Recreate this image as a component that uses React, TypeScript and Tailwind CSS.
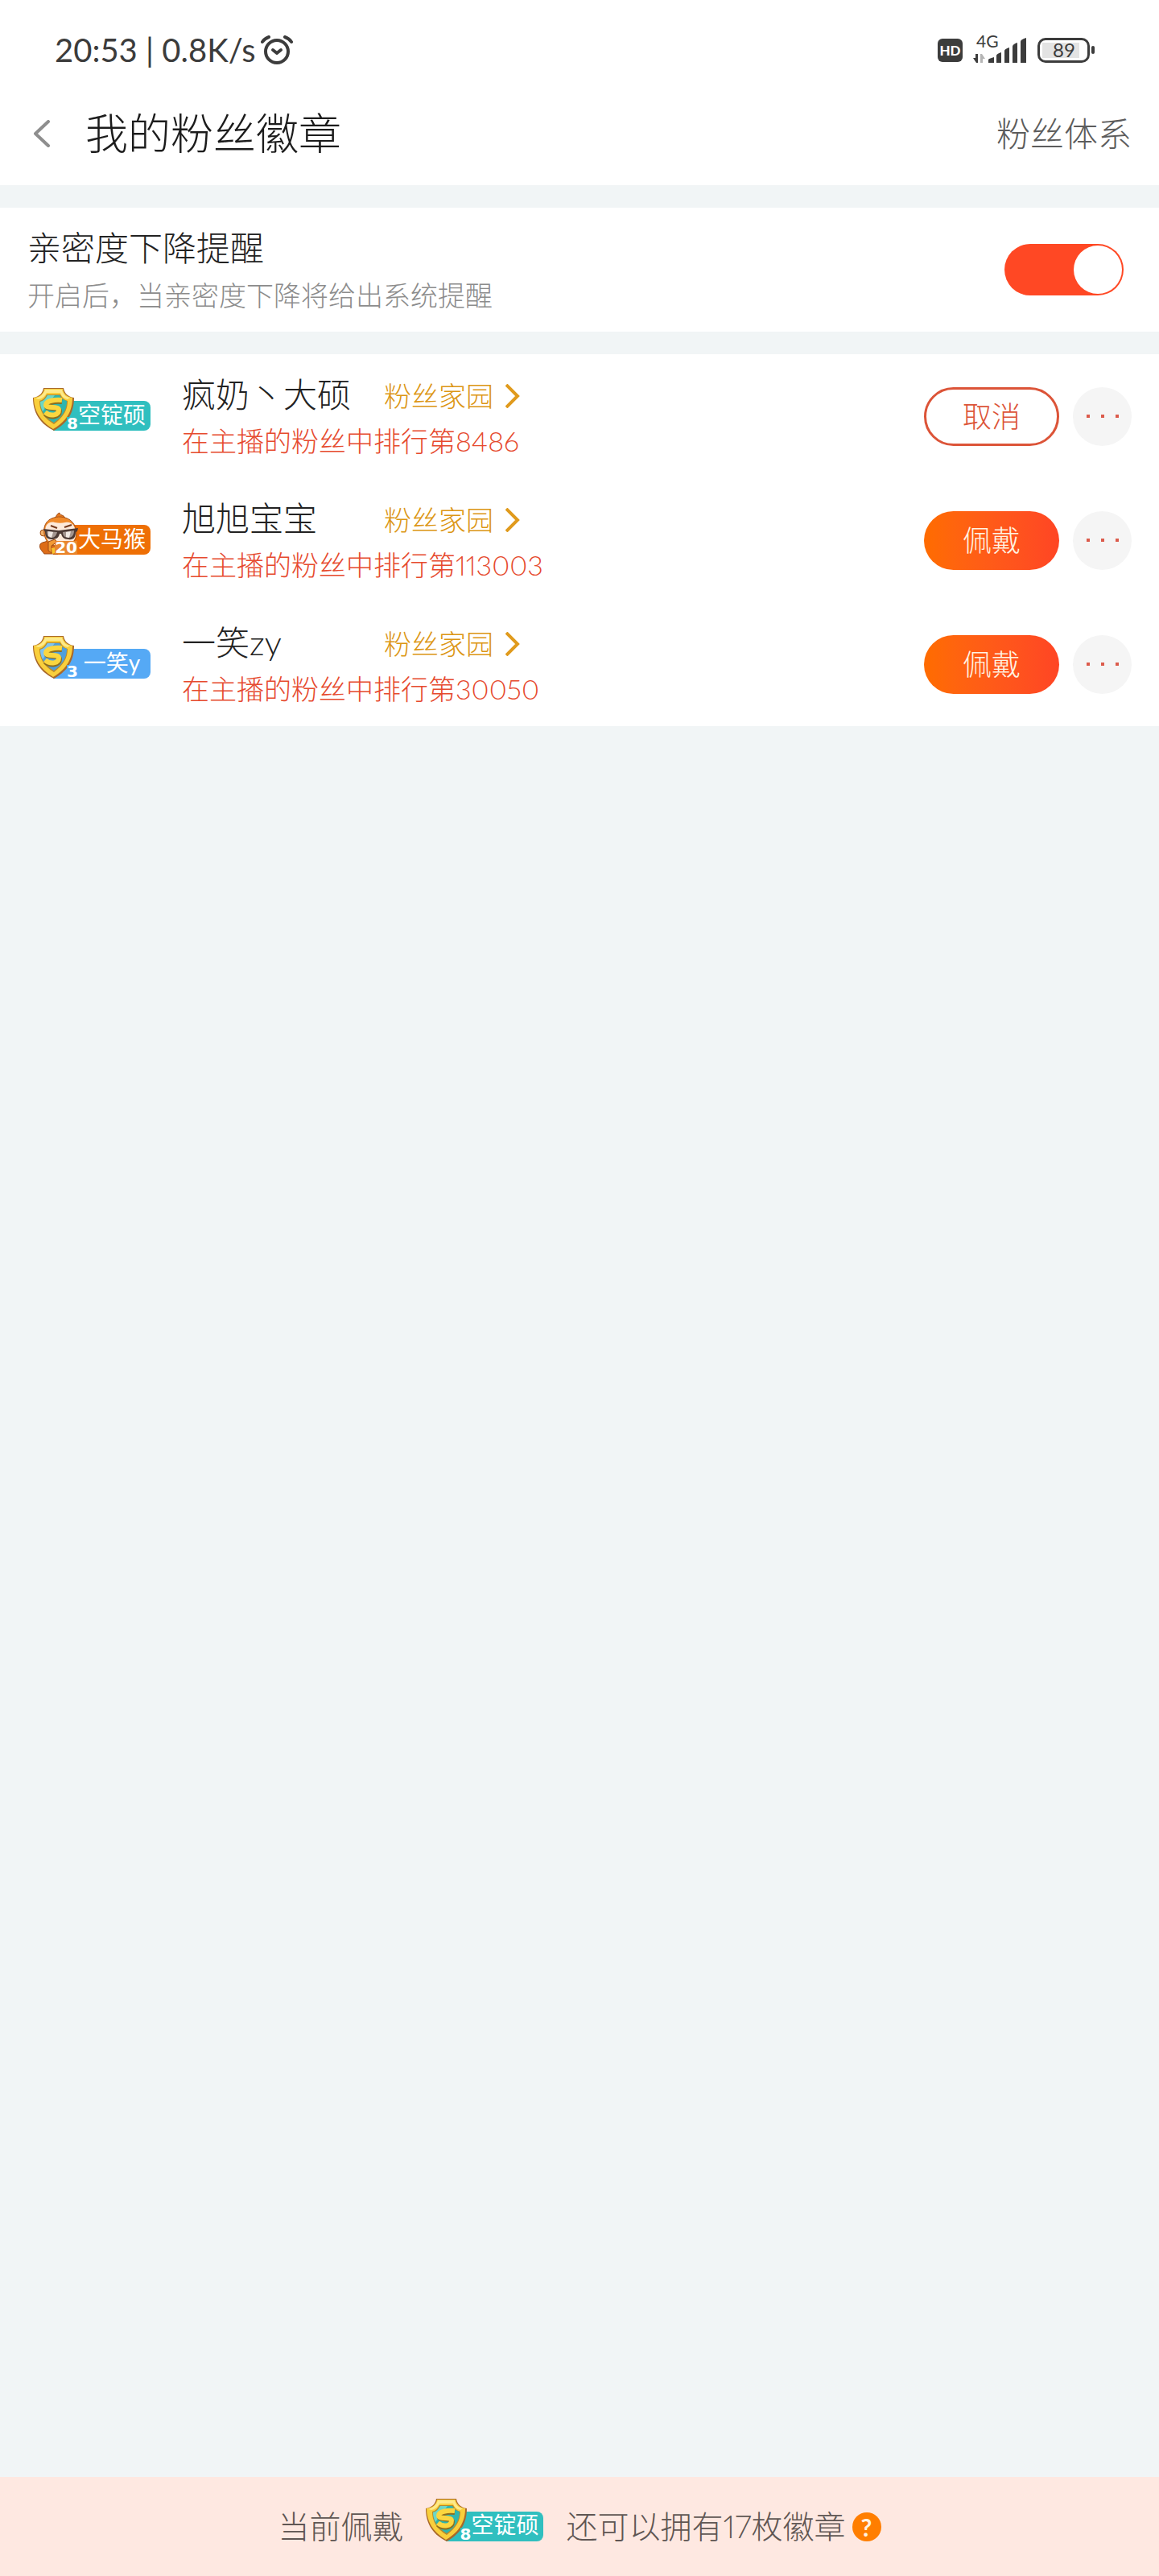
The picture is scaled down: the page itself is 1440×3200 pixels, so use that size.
import { useState } from "react";

type BadgeKind = "teal" | "blue" | "monkey";

type Badge = { kind: BadgeKind; level: string; label: string };

type Streamer = { name: string; rank: string; worn: boolean; badge: Badge };

const streamers: Streamer[] = [
  { name: "疯奶丶大硕", rank: "8486", worn: true, badge: { kind: "teal", level: "8", label: "空锭硕" } },
  { name: "旭旭宝宝", rank: "113003", worn: false, badge: { kind: "monkey", level: "20", label: "大马猴" } },
  { name: "一笑zy", rank: "30050", worn: false, badge: { kind: "blue", level: "3", label: "一笑y" } },
];

const barColor: Record<BadgeKind, string> = {
  teal: "bg-[#30bfbf]",
  blue: "bg-[#55a9f5]",
  monkey: "bg-[#ee6f05]",
};

const levelColor: Record<BadgeKind, string> = {
  teal: "right-[90px] bg-[#30bfbf]",
  blue: "right-[90px] bg-[#55a9f5]",
  monkey: "right-[91px] bg-[#e8862f]",
};

function ShieldIcon({ kind }: { kind: "teal" | "blue" }) {
  const inner = kind === "teal" ? "#2fb5ae" : "#4f9fdc";
  const light = kind === "teal" ? "#6fd6c4" : "#7fc3ee";
  return (
    <svg viewBox="0 0 51 53" className="absolute left-0 top-0 h-[53px] w-[51px]" aria-hidden="true">
      <path d="M13 0H38C39 6 43 11 51 12C51 27 46 42 26 53C6 43 0 28 0 12C8 11 12 6 13 0Z" fill="#a9692a" />
      <path d="M14 1H37C38 7 42 11 49 12C49 26 44 40 25 51C8 41 1 27 1 12C9 11 13 7 14 1Z" fill="#f9cf3c" />
      <path d="M15 2H36C37 7 40 11 46 12L43 14C38 13 35 10 34 6H17C15 10 12 13 7 14L3 13C9 11 13 8 15 2Z" fill="#fde98a" />
      <path d="M17 8H34C36 12 39 15 43 16C43 27 38 36 26 45C13 37 8 28 8 16C12 15 15 12 17 8Z" fill="#b98a2c" />
      <path d="M18 9H33C35 13 38 15 42 16C42 27 37 35 26 43C14 36 9 27 9 17C13 16 16 13 18 9Z" fill={inner} />
      <path d="M18 9H27L12 29C10 25 9 21 9 17C13 16 16 13 18 9Z" fill={light} />
      <path d="M36 17C27 16 17 18 17 23C17 27 33 23 33 29C33 36 22 38 15 32" fill="none" stroke="#8d6d1e" strokeWidth="6" strokeLinejoin="round" />
      <path d="M36 15C27 14 16 16 16 21C16 26 32 22 32 27C32 34 22 36 15 30" fill="none" stroke="#fbd63f" strokeWidth="6" strokeLinejoin="round" />
    </svg>
  );
}

function MonkeyIcon() {
  return (
    <svg viewBox="0 0 51 53" className="absolute left-[7px] top-0 h-[53px] w-[51px]" aria-hidden="true">
      <path d="M20 8C22 5 23 2 26 1C26 4 28 3 31 5C32 6 33 7 33 9Z" fill="#e87a1e" stroke="#9d4a16" />
      <path d="M2 40C4 37 8 38 10 36L20 34L24 52H7C4 48 0 45 2 40Z" fill="#dd6d18" stroke="#9d4a16" />
      <circle cx="6" cy="26" r="4" fill="#f3b26b" stroke="#9d4a16" />
      <path d="M7 27C5 13 14 6 27 6C40 7 47 15 47 28C46 39 36 44 27 43C15 43 8 37 7 27Z" fill="#f08a2a" stroke="#a65219" />
      <path d="M9 28C6 16 13 11 20 13C25 14 29 14 33 13C41 11 47 18 46 29C45 38 36 43 27 42C17 42 10 37 9 28Z" fill="#fdeadb" />
      <path d="M15 17L23 20M32 19L41 16" stroke="#75391c" strokeWidth="2" />
      <path d="M6 21L25 23L49 20L48 24L46 25C46 32 43 35 37 34C31 34 29 31 28 27H26C25 32 22 34 16 34C10 34 8 30 8 25Z" fill="#4c3a35" />
      <path d="M10 24L23 25C22 29 20 32 16 32C12 32 10 29 10 24Z" fill="#a3958f" />
      <path d="M30 25L44 23C44 29 41 32 37 32C33 32 30 30 30 25Z" fill="#a3958f" />
      <path d="M12 24L18 25L16 32L12 30ZM34 25L40 24L38 32L34 31Z" fill="#f0e8e3" />
      <path d="M12 37L20 34L23 37L16 42V51L12 48Z" fill="#f39a34" stroke="#9d4a16" />
      <path d="M16 45L21 44V51L17 52Z" fill="#f9c52e" />
    </svg>
  );
}

function FanBadge({ badge }: { badge: Badge }) {
  return (
    <div className="relative h-[70px] w-[146px] shrink-0 pt-4">
      <div
        className={`ml-[25px] flex h-[37px] items-center justify-center rounded-r-lg pb-1 pl-[25px] text-[28px] font-normal leading-none whitespace-nowrap text-white ${barColor[badge.kind]}`}
      >
        {badge.label}
      </div>
      {badge.kind === "monkey" ? <MonkeyIcon /> : <ShieldIcon kind={badge.kind} />}
      <span
        className={`absolute top-[36px] font-['DejaVu_Sans'] text-[20px] leading-[16px] font-bold text-white ${levelColor[badge.kind]}`}
      >
        {badge.level}
      </span>
    </div>
  );
}

function StatusBar() {
  return (
    <div className="flex h-[124px] items-center justify-between pr-20 pl-[68px] text-[#3c3c3c]">
      <div className="flex items-center gap-1.5 text-[40px] leading-none font-normal">
        <span>20:53 | 0.8K/s</span>
        <svg viewBox="0 0 40 36" className="h-9 w-10" fill="none" stroke="currentColor" strokeLinecap="round" aria-label="闹钟">
          <circle cx="20" cy="20" r="14" strokeWidth="4" />
          <path d="M2 8C4 5 7 3 10 2M38 8C36 5 33 3 30 2" strokeWidth="4" />
          <path d="M15 18L20 22L25 18" strokeWidth="4" strokeLinejoin="round" />
        </svg>
      </div>
      <div className="flex items-center font-normal">
        <span className="flex h-[29px] w-[31px] items-center justify-center rounded-md bg-[#3c3c3c] text-[17px] leading-none font-black text-white">
          HD
        </span>
        <div className="relative ml-[13px] h-[34px] w-[67px]">
          <span className="absolute -top-1.5 left-1 text-[21px] leading-[24px]">4G</span>
          <svg viewBox="0 0 67 34" className="h-[34px] w-[67px]" fill="currentColor" aria-hidden="true">
            <path d="M3 22H6V33H4L0 27H3Z" />
            <path d="M9 22H11L15 28H12V33H9Z" fill="#b5b5b5" />
            <path d="M19 33V29Q19 28 26 26V33ZM29 33V24Q29 22 35 20V33ZM39 33V18Q39 16 45 14V33ZM49 33V13Q49 10 55 8V33ZM59 33V7Q59 4 66 2V33Z" />
          </svg>
        </div>
        <div className="ml-[13px] flex items-center gap-0.5" aria-label="电量 89%">
          <div className="h-[31px] w-[65px] rounded-[10px] border-[3px] border-current p-[3px]">
            <div className="flex h-full w-[46px] items-center justify-center bg-[#e3e3e3] pl-2 text-[24px] leading-none">89</div>
          </div>
          <div className="h-[10px] w-1 rounded-full bg-current" />
        </div>
      </div>
    </div>
  );
}

function StreamerRow({ item, onToggle }: { item: Streamer; onToggle: () => void }) {
  return (
    <li className="flex h-[154px] items-center px-[34px]">
      <div className="w-48 shrink-0 pl-[7px]">
        <FanBadge badge={item.badge} />
      </div>
      <div className="min-w-0 grow pt-1">
        <div className="flex h-[58px] items-center">
          <h2 className="w-[251px] shrink-0 text-[42px] leading-none text-[#222222]">{item.name}</h2>
          <a href="#home" className="flex items-center gap-[15px] pt-1 text-[34px] leading-none text-[#dc9614]">
            粉丝家园
            <svg viewBox="0 0 18 30" className="h-[30px] w-[18px]" fill="none" stroke="#e09a1c" strokeWidth="4" aria-hidden="true">
              <path d="M1 1L15 15L1 29" />
            </svg>
          </a>
        </div>
        <p className="text-[34px] leading-[58px] text-[#e64a2e] proportional-nums">在主播的粉丝中排行第{item.rank}</p>
      </div>
      <button
        type="button"
        onClick={onToggle}
        className={
          item.worn
            ? "h-[73px] w-[168px] shrink-0 rounded-full border-[3px] border-[#dc5438] text-[36px] leading-none text-[#dc5438]"
            : "h-[73px] w-[168px] shrink-0 rounded-full bg-linear-to-r from-[#ff6c00] to-[#ff4524] text-[36px] leading-none text-[#fff3e2]"
        }
      >
        {item.worn ? "取消" : "佩戴"}
      </button>
      <button
        type="button"
        aria-label="更多"
        className="ml-[17px] flex size-[73px] shrink-0 items-center justify-center gap-3.5 rounded-full bg-[#f5f5f5]"
      >
        <span className="size-1 bg-[#dc5b4c]" />
        <span className="size-1 bg-[#dc5b4c]" />
        <span className="size-1 bg-[#dc5b4c]" />
      </button>
    </li>
  );
}

export default function App() {
  const [remind, setRemind] = useState(true);
  const [wornIndex, setWornIndex] = useState(0);
  const worn = wornIndex >= 0 ? streamers[wornIndex].badge : null;

  return (
    <div className="flex min-h-screen flex-col bg-[#f1f5f6] font-['Lato','Noto_Sans_CJK_SC',sans-serif] font-light">
      <header className="bg-white">
        <StatusBar />
        <div className="flex h-[106px] items-start justify-between pr-[34px] pl-10">
          <div className="flex items-center gap-11">
            <button type="button" aria-label="返回" className="flex h-[84px] items-center">
              <svg viewBox="0 0 22 34" className="h-[34px] w-[22px]" fill="none" stroke="#8e8e8e" strokeWidth="4" strokeLinecap="round" strokeLinejoin="round" aria-hidden="true">
                <path d="M20 2L4 17L20 32" />
              </svg>
            </button>
            <h1 className="text-[53px] leading-[84px] text-[#1c1c1c]">我的粉丝徽章</h1>
          </div>
          <a href="#system" className="text-[42px] leading-[84px] text-[#5c5c5c]">
            粉丝体系
          </a>
        </div>
      </header>

      <main className="grow">
        <section className="mt-7 flex h-[154px] items-center justify-between bg-white pr-11 pl-[34px]">
          <label htmlFor="remind" className="pt-1">
            <span className="block text-[42px] leading-[60px] text-[#222222]">亲密度下降提醒</span>
            <span className="block text-[34px] leading-[58px] text-[#8c8c8c]">开启后，当亲密度下降将给出系统提醒</span>
          </label>
          <input
            id="remind"
            type="checkbox"
            role="switch"
            checked={remind}
            onChange={(e) => setRemind(e.target.checked)}
            className="flex h-16 w-[148px] shrink-0 cursor-pointer appearance-none items-center rounded-full bg-[#d5d5d5] p-0.5 before:size-[60px] before:rounded-full before:bg-white before:content-[''] checked:justify-end checked:bg-[#ff4824]"
          />
        </section>

        <ul className="mt-7 bg-white">
          {streamers.map((item, i) => (
            <StreamerRow
              key={item.name}
              item={{ ...item, worn: i === wornIndex }}
              onToggle={() => setWornIndex(i === wornIndex ? -1 : i)}
            />
          ))}
        </ul>
      </main>

      <footer className="flex h-[123px] items-center justify-center bg-[#fee8e1] text-[39px] leading-none text-[#5f5653]">
        <span className="mr-7">当前佩戴</span>
        {worn && <FanBadge badge={worn} />}
        <span className="ml-7 proportional-nums">还可以拥有17枚徽章</span>
        <button
          type="button"
          aria-label="帮助"
          className="ml-2 flex size-9 items-center justify-center rounded-full bg-[#ff7e00] text-[30px] leading-none font-bold text-[#fff3e2]"
        >
          ?
        </button>
      </footer>
    </div>
  );
}
